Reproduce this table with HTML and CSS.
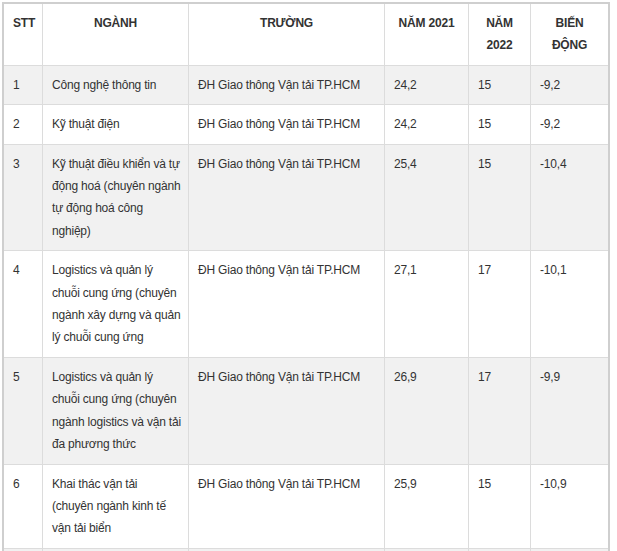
FILE: index.html
```html
<!DOCTYPE html>
<html lang="vi">
<head>
<meta charset="utf-8">
<link rel="stylesheet" href="styles.css">
</head>
<body>
<div class="wrap">
<table class="score">
<colgroup>
<col class="c-stt"><col class="c-nganh"><col class="c-truong"><col class="c-2021"><col class="c-2022"><col class="c-bd">
</colgroup>
<thead>
<tr><th>STT</th><th>NGÀNH</th><th>TRƯỜNG</th><th>NĂM 2021</th><th>NĂM 2022</th><th>BIẾN ĐỘNG</th></tr>
</thead>
<tbody>
<tr class="alt"><td>1</td><td>Công nghệ thông tin</td><td>ĐH Giao thông Vận tải TP.HCM</td><td>24,2</td><td>15</td><td>-9,2</td></tr>
<tr><td>2</td><td>Kỹ thuật điện</td><td>ĐH Giao thông Vận tải TP.HCM</td><td>24,2</td><td>15</td><td>-9,2</td></tr>
<tr class="alt"><td>3</td><td class="lines">Kỹ thuật điều khiển và tự<br>động hoá (chuyên ngành<br>tự động hoá công<br>nghiệp)</td><td>ĐH Giao thông Vận tải TP.HCM</td><td>25,4</td><td>15</td><td>-10,4</td></tr>
<tr><td>4</td><td class="lines">Logistics và quản lý<br>chuỗi cung ứng (chuyên<br>ngành xây dựng và quản<br>lý chuỗi cung ứng</td><td>ĐH Giao thông Vận tải TP.HCM</td><td>27,1</td><td>17</td><td>-10,1</td></tr>
<tr class="alt"><td>5</td><td class="lines">Logistics và quản lý<br>chuỗi cung ứng (chuyên<br>ngành logistics và vận tải<br>đa phương thức</td><td>ĐH Giao thông Vận tải TP.HCM</td><td>26,9</td><td>17</td><td>-9,9</td></tr>
<tr><td>6</td><td class="lines">Khai thác vận tải<br>(chuyên ngành kinh tế<br>vận tải biển</td><td>ĐH Giao thông Vận tải TP.HCM</td><td>25,9</td><td>15</td><td>-10,9</td></tr>
<tr class="alt"><td>&nbsp;</td><td>&nbsp;</td><td>&nbsp;</td><td>&nbsp;</td><td>&nbsp;</td><td>&nbsp;</td></tr>
</tbody>
</table>
</div>
</body>
</html>
```
FILE: styles.css
```css
html, body {
  margin: 0;
  padding: 0;
  background: #fff;
}
.wrap {
  padding: 2px;
}
.score {
  width: 608px;
  table-layout: fixed;
  border-collapse: separate;
  border-spacing: 0;
  border: 2px solid #cfcfcf;
  font-family: "Liberation Sans", Arial, sans-serif;
  font-size: 12px;
  line-height: 22.4px;
  letter-spacing: -0.2px;
  color: #333;
}
.c-stt { width: 38px; }
.c-nganh { width: 146px; }
.c-truong { width: 196px; }
.c-2021 { width: 84px; }
.c-2022 { width: 62px; }
.c-bd { width: 78px; }
.score th,
.score td {
  padding: 8px 6px 8px 9px;
  vertical-align: top;
  border-left: 1px solid #dcdcdc;
  border-top: 1px solid #dcdcdc;
  text-align: left;
}
.score th {
  font-weight: bold;
  text-align: center;
  border-top: none;
  padding: 8px 9px;
}
.score tr > :first-child {
  border-left: none;
}
.score .lines {
  white-space: nowrap;
}
.score .alt td {
  background: #f1f1f1;
}
```
